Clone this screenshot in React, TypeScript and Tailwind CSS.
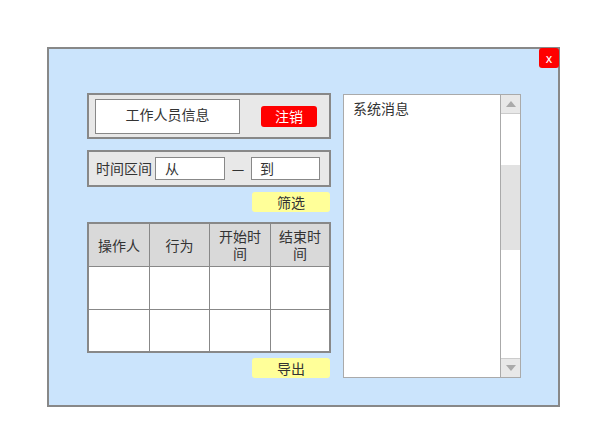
import React from "react";

const font = { fontFamily: '"Noto Sans CJK SC", "Noto Sans", sans-serif' };

export default function App() {
  const cell = "border-r border-b border-[#888] flex items-center justify-center text-center";
  return (
    <div className="w-[591px] h-[438px] bg-white pt-[47px] pl-[47px] text-[#333]" style={font}>
      <div className="relative w-[513px] h-[360px] border-2 border-[#888] bg-[#cbe4fc] flex pl-[38px] pt-[44px] gap-[12px]">
        <button className="absolute top-[-1px] right-[-1px] w-[20px] h-[20px] rounded-[3px] bg-[#ff0000] text-white text-[13px] leading-[20px] flex items-center justify-center">
          x
        </button>

        <div className="w-[244px] flex flex-col">
          <div className="h-[46px] border-2 border-[#888] bg-[#e8e8e8] flex items-start pl-[6px] pt-[4px]">
            <div className="w-[145px] h-[35px] border border-[#888] bg-white flex items-center justify-center text-[14px] pb-[5px]">
              工作人员信息
            </div>
            <div className="ml-[21px] mt-[7px] w-[56px] h-[21px] rounded-[3px] bg-[#ff0000] text-white text-[14px] flex items-center justify-center">
              注销
            </div>
          </div>

          <div className="mt-[11px] h-[37px] border-2 border-[#888] bg-[#e8e8e8] flex items-center pl-[7px] text-[14px]">
            <span>时间区间</span>
            <div className="ml-[3px] w-[70px] h-[23px] border border-[#888] bg-white flex items-center pl-[9px]">从</div>
            <span className="ml-[6px] w-[14px] text-center">—</span>
            <div className="ml-[6px] w-[69px] h-[23px] border border-[#888] bg-white flex items-center pl-[8px]">到</div>
          </div>

          <div className="mt-[5px] self-end mr-[1px] w-[78px] h-[20px] rounded-[3px] bg-[#ffff99] text-[14px] flex items-center justify-center">
            筛选
          </div>

          <div className="mt-[10px] h-[131px] border-2 border-[#888] bg-white grid grid-cols-[61px_60px_61px_58px] grid-rows-[43px_43px_41px] text-[14px] leading-[17px]">
            <div className={`${cell} bg-[#d9d9d9]`}>操作人</div>
            <div className={`${cell} bg-[#d9d9d9]`}>行为</div>
            <div className={`${cell} bg-[#d9d9d9] px-[3px]`}>开始时间</div>
            <div className={`${cell} bg-[#d9d9d9] border-r-0 px-[3px]`}>结束时间</div>
            <div className={cell}></div>
            <div className={cell}></div>
            <div className={cell}></div>
            <div className={`${cell} border-r-0`}></div>
            <div className={`${cell} border-b-0`}></div>
            <div className={`${cell} border-b-0`}></div>
            <div className={`${cell} border-b-0`}></div>
            <div className={`${cell} border-b-0 border-r-0`}></div>
          </div>

          <div className="mt-[5px] self-end mr-[1px] w-[78px] h-[20px] rounded-[3px] bg-[#ffff99] text-[14px] flex items-center justify-center">
            导出
          </div>
        </div>

        <div className="mt-[1px] w-[178px] h-[284px] border border-[#aaa] bg-white flex">
          <div className="flex-1 pl-[9px] pt-[3px] text-[14px]">系统消息</div>
          <div className="w-[20px] border-l border-[#aaa] flex flex-col">
            <div className="h-[19px] bg-[#e8e8e8] border-b border-[#ccc] flex items-center justify-center">
              <svg width="10" height="6" viewBox="0 0 10 6"><polygon points="5,0 10,6 0,6" fill="#aaa" /></svg>
            </div>
            <div className="h-[51px]"></div>
            <div className="h-[85px] bg-[#e2e2e2]"></div>
            <div className="flex-1"></div>
            <div className="h-[19px] bg-[#e8e8e8] border-t border-[#ccc] flex items-center justify-center">
              <svg width="10" height="6" viewBox="0 0 10 6"><polygon points="0,0 10,0 5,6" fill="#aaa" /></svg>
            </div>
          </div>
        </div>
      </div>
    </div>
  );
}
